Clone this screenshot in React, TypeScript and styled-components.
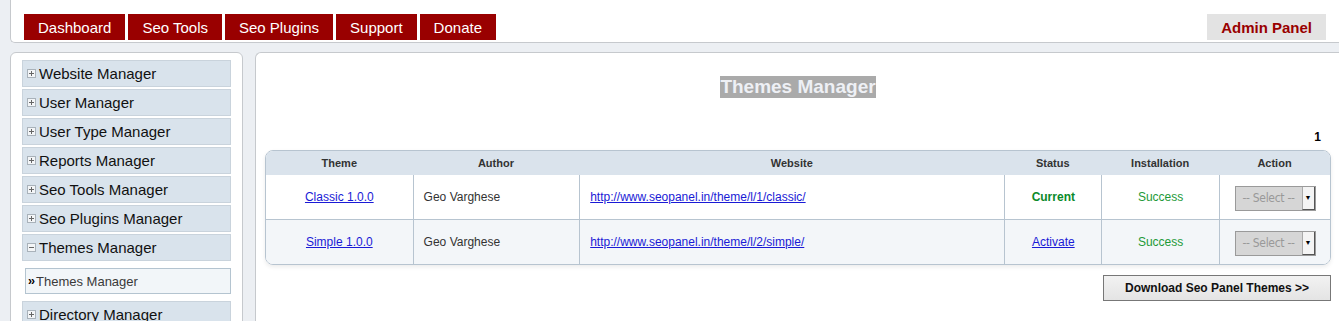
import styled, {createGlobalStyle} from 'styled-components';

const GlobalStyle = createGlobalStyle`
    html, body {
        margin: 0;
        padding: 0;
        background: #eceff3;
        font-family: "Liberation Sans", Arial, sans-serif;
        overflow: hidden;
    }
`;

const Page = styled.div`
    width: 1339px;
    height: 321px;
    overflow: hidden;
`;

const Header = styled.header`
    display: flex;
    align-items: flex-end;
    justify-content: space-between;
    height: 43px;
    margin-left: 10px;
    padding: 0 13px 2px 13px;
    background: #fff;
    border-left: 1px solid #c6c9cd;
    border-bottom: 1px solid #c6c9cd;
    border-bottom-left-radius: 5px;
    box-sizing: border-box;
`;

const Tabs = styled.nav`
    display: flex;
    gap: 3px;
`;

const Tab = styled.a`
    display: flex;
    align-items: center;
    height: 26px;
    padding: 0 14px;
    background: #990000;
    color: #fff;
    font-size: 15px;
    text-decoration: none;
`;

const AdminTab = styled.a`
    display: flex;
    align-items: center;
    height: 26px;
    padding: 0 14px;
    background: #e3e3e3;
    color: #990000;
    font-size: 15px;
    font-weight: bold;
    text-decoration: none;
`;

const Body = styled.div`
    display: flex;
    gap: 12px;
    margin-top: 9px;
    padding-left: 10px;
`;

const Sidebar = styled.aside`
    width: 233px;
    height: 300px;
    box-sizing: border-box;
    background: #fff;
    border: 1px solid #c6c9cd;
    border-radius: 6px 6px 0 0;
    padding: 7px 11px 0 11px;
    display: flex;
    flex-direction: column;
    gap: 2px;
`;

const MenuItem = styled.div`
    display: flex;
    align-items: center;
    gap: 3px;
    height: 27px;
    box-sizing: border-box;
    padding-left: 4px;
    background: #d9e3ec;
    border: 1px solid #c9d3dc;
    color: #111;
    font-size: 15px;
    flex: none;
`;

const Toggle = styled.span<{open?: boolean}>`
    width: 7px;
    height: 7px;
    border: 1px solid #a9b2ba;
    background: #f3f5f7;
    position: relative;
    flex: none;

    &::before {
        content: '';
        position: absolute;
        left: 1px;
        right: 1px;
        top: 3px;
        height: 1px;
        background: #666;
    }
    &::after {
        content: '';
        display: ${p => (p.open ? 'none' : 'block')};
        position: absolute;
        top: 1px;
        bottom: 1px;
        left: 3px;
        width: 1px;
        background: #666;
    }
`;

const SubMenu = styled.div`
    padding: 5px 0 5px 3px;
    flex: none;
`;

const SubItem = styled.div`
    display: flex;
    align-items: center;
    height: 26px;
    box-sizing: border-box;
    padding-left: 2px;
    background: #f2f6f9;
    border: 1px solid #b4c4d0;
    color: #3a3a3a;
    font-size: 13px;

    b {
        font-size: 12px;
        color: #000;
        letter-spacing: -1px;
        margin-right: 2px;
    }
`;

const Main = styled.main`
    flex: 1;
    height: 300px;
    box-sizing: border-box;
    background: #fff;
    border: 1px solid #c6c9cd;
    border-right: none;
    border-radius: 6px 0 0 0;
    padding: 0 8px 0 9px;
    display: flex;
    flex-direction: column;
`;

const TitleRow = styled.div`
    display: flex;
    justify-content: center;
    margin-top: 23px;
`;

const Title = styled.h1`
    margin: 0;
    background: #aaaaaa;
    color: #eef0f5;
    font-size: 19px;
    line-height: 22px;
    font-weight: bold;
`;

const Pager = styled.div`
    margin-top: 32px;
    text-align: right;
    font-size: 12px;
    font-weight: bold;
    padding-right: 10px;
    height: 16px;
`;

const Table = styled.table`
    margin-top: 4px;
    width: 100%;
    border-collapse: separate;
    border-spacing: 0;
    border: 1px solid #b7c4d0;
    border-radius: 8px;
    overflow: hidden;
    box-shadow: 0 2px 4px rgba(0, 0, 0, 0.08);
    font-size: 12px;
    color: #333;
`;

const Th = styled.th`
    background: #dae3ec;
    height: 24px;
    font-size: 11px;
    font-weight: bold;
    color: #333;
    padding: 0;
`;

const Tr = styled.tr<{alt?: boolean}>`
    background: ${p => (p.alt ? '#f3f6f9' : '#fff')};
`;

const Td = styled.td<{align?: string; first?: boolean}>`
    height: 44px;
    padding: 0 10px;
    text-align: ${p => p.align || 'left'};
    border-left: ${p => (p.first ? 'none' : '1px solid #b7c4d0')};
    border-top: 1px solid #b7c4d0;
    tr:first-child > & {
        border-top: none;
    }
`;

const Link = styled.a`
    color: #1a1ad6;
    text-decoration: underline;
`;

const Current = styled.span`
    color: #0a8a2a;
    font-weight: bold;
`;

const Success = styled.span`
    color: #1e9a38;
`;

const Select = styled.div`
    display: inline-flex;
    align-items: stretch;
    height: 25px;
    width: 81px;
    box-sizing: border-box;
    border: 1px solid #9a9a9a;
    background: #d6d6d6;
    margin-top: 2px;
`;

const SelectText = styled.span`
    flex: 1;
    display: flex;
    align-items: center;
    justify-content: center;
    color: #999;
    font-size: 12px;
    font-family: "DejaVu Sans Condensed", "Liberation Sans Narrow", sans-serif;
    letter-spacing: -0.3px;
`;

const SelectArrow = styled.span`
    width: 11px;
    background: #f4f4f4;
    border-left: 1px solid #aaa;
    border-right: 1px solid #555;
    border-bottom: 1px solid #555;
    display: flex;
    align-items: center;
    justify-content: center;
    font-size: 7px;
    color: #000;
`;

const Footer = styled.div`
    display: flex;
    justify-content: flex-end;
    margin-top: 10px;
`;

const DownloadButton = styled.button`
    width: 228px;
    height: 26px;
    background: linear-gradient(#f2f2f2, #e4e4e4);
    border: 1px solid #777;
    font-family: "Liberation Sans", Arial, sans-serif;
    font-size: 12px;
    font-weight: bold;
    color: #111;
    padding: 0;
`;

const menu = [
    'Website Manager',
    'User Manager',
    'User Type Manager',
    'Reports Manager',
    'Seo Tools Manager',
    'Seo Plugins Manager',
];

const themes = [
    {name: 'Classic 1.0.0', url: 'http://www.seopanel.in/theme/l/1/classic/', current: true},
    {name: 'Simple 1.0.0', url: 'http://www.seopanel.in/theme/l/2/simple/', current: false},
];

const SelectBox = () => (
    <Select>
        <SelectText>-- Select --</SelectText>
        <SelectArrow>▼</SelectArrow>
    </Select>
);

export default function App() {
    return (
        <Page>
            <GlobalStyle/>
            <Header>
                <Tabs>
                    <Tab>Dashboard</Tab>
                    <Tab>Seo Tools</Tab>
                    <Tab>Seo Plugins</Tab>
                    <Tab>Support</Tab>
                    <Tab>Donate</Tab>
                </Tabs>
                <AdminTab>Admin Panel</AdminTab>
            </Header>
            <Body>
                <Sidebar>
                    {menu.map(m => (
                        <MenuItem key={m}><Toggle/>{m}</MenuItem>
                    ))}
                    <MenuItem><Toggle open/>Themes Manager</MenuItem>
                    <SubMenu>
                        <SubItem><b>››</b>Themes Manager</SubItem>
                    </SubMenu>
                    <MenuItem><Toggle/>Directory Manager</MenuItem>
                </Sidebar>
                <Main>
                    <TitleRow><Title>Themes Manager</Title></TitleRow>
                    <Pager>1</Pager>
                    <Table>
                        <colgroup>
                            <col style={{width: 147}}/>
                            <col style={{width: 167}}/>
                            <col style={{width: 426}}/>
                            <col style={{width: 97}}/>
                            <col style={{width: 118}}/>
                            <col style={{width: 111}}/>
                        </colgroup>
                        <thead>
                            <tr>
                                <Th>Theme</Th>
                                <Th>Author</Th>
                                <Th>Website</Th>
                                <Th>Status</Th>
                                <Th>Installation</Th>
                                <Th>Action</Th>
                            </tr>
                        </thead>
                        <tbody>
                            {themes.map((t, i) => (
                                <Tr key={t.name} alt={i % 2 === 1}>
                                    <Td first align="center"><Link>{t.name}</Link></Td>
                                    <Td>Geo Varghese</Td>
                                    <Td><Link>{t.url}</Link></Td>
                                    <Td align="center">{t.current ? <Current>Current</Current> : <Link>Activate</Link>}</Td>
                                    <Td align="center"><Success>Success</Success></Td>
                                    <Td align="center"><SelectBox/></Td>
                                </Tr>
                            ))}
                        </tbody>
                    </Table>
                    <Footer>
                        <DownloadButton>Download Seo Panel Themes &gt;&gt;</DownloadButton>
                    </Footer>
                </Main>
            </Body>
        </Page>
    );
}
